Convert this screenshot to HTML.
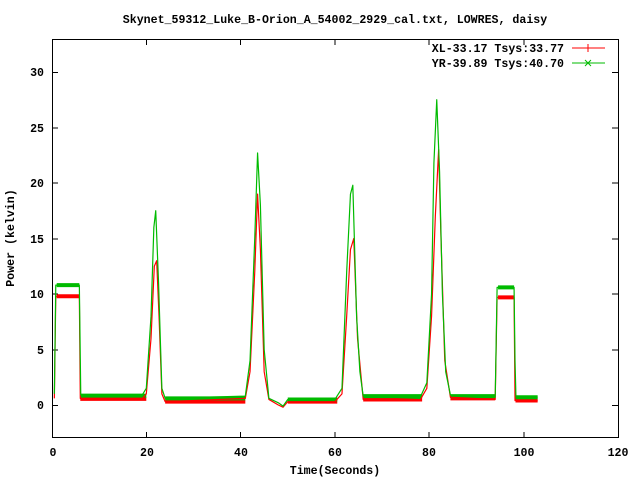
<!DOCTYPE html>
<html><head><style>
body{margin:0;background:#fff;width:640px;height:480px;overflow:hidden}
text{font-family:"Liberation Mono",monospace;font-weight:bold;font-size:11.6px;fill:#000}
</style></head><body>
<svg width="640" height="480" xmlns="http://www.w3.org/2000/svg">
<rect width="640" height="480" fill="#fff"/>
<text x="335" y="23" text-anchor="middle">Skynet_59312_Luke_B-Orion_A_54002_2929_cal.txt, LOWRES, daisy</text>
<text x="335" y="474" text-anchor="middle">Time(Seconds)</text>
<text transform="translate(14,238) rotate(-90)" text-anchor="middle">Power (kelvin)</text>
<g stroke="#000" stroke-width="1" fill="none">
<rect x="52.5" y="39.5" width="566" height="398"/>
<path d="M52 405.5h6M52 350h6M52 294h6M52 239h6M52 183h6M52 128h6M52 72.5h6
M618 405.5h-6M618 350h-6M618 294h-6M618 239h-6M618 183h-6M618 128h-6M618 72.5h-6
M146.5 438v-6M240.5 438v-6M335 438v-6M429 438v-6M524 438v-6
M146.5 39v6M240.5 39v6M335 39v6M429 39v6M524 39v6"/>
</g>
<g text-anchor="end">
<text x="44" y="409">0</text><text x="44" y="354">5</text><text x="44" y="298">10</text>
<text x="44" y="243">15</text><text x="44" y="187">20</text><text x="44" y="132">25</text><text x="44" y="76">30</text>
</g>
<g text-anchor="middle">
<text x="53" y="456">0</text><text x="147" y="456">20</text><text x="241" y="456">40</text>
<text x="335" y="456">60</text><text x="429" y="456">80</text><text x="524" y="456">100</text><text x="618" y="456">120</text>
</g>
<text x="564" y="52" text-anchor="end">XL-33.17 Tsys:33.77</text>
<text x="564" y="67" text-anchor="end">YR-39.89 Tsys:40.70</text>
<path d="M572 48h33M588 44v8" stroke="#f00" fill="none"/>
<path d="M572 63h33M585 60l6 6M585 66l6-6" stroke="#0b0" fill="none"/>
<g transform="translate(52,405) scale(4.715,-11.1)" fill="none" stroke-linejoin="round">
<g stroke="#f00" stroke-width="4">
<path vector-effect="non-scaling-stroke" d="M1 9.8H5.8M94.6 9.7H98M6 0.55H20M24 0.3H41M50 0.3H60.5M66 0.5H78.5M84.5 0.6H94M98.3 0.4H103"/>
</g>
<g stroke="#0b0" stroke-width="4">
<path vector-effect="non-scaling-stroke" d="M1 10.8H5.8M94.6 10.6H98M6 0.85H20M24 0.6H41M50 0.5H60.5M66 0.8H78.5M84.5 0.8H94M98.3 0.7H103"/>
</g>
<polyline vector-effect="non-scaling-stroke" stroke="#f00" stroke-width="1.2" points="0.5,0.6 0.8,9.8 5.8,9.8 6,0.6 19,0.5 20,1 21,6 21.7,12.5 22.2,13 22.7,8 23.3,1 24,0.3 41,0.6 42,3 43,12 43.6,19 44.2,14 45,3 46,0.5 48,0 49,-0.2 50,0.3 60,0.3 61.5,1 62.5,8 63.3,14 64,15 64.8,6 66,0.5 78,0.4 79.5,1.5 80.5,8 81.3,17 82,23 82.5,15 83.3,4 84.5,0.7 94,0.5 94.4,9.7 98,9.7 98.2,0.4 103,0.4"/>
<polyline vector-effect="non-scaling-stroke" stroke="#0b0" stroke-width="1.2" points="0.5,1 0.8,10.8 5.8,10.8 6,4.2 6.1,0.9 19,0.8 20,1.5 21,8 21.6,16 22,17.5 22.6,11 23.3,1.5 24,0.6 41,0.8 42,4 43,15 43.6,22.7 44.2,18 45,5 46,0.6 48,0.2 49,-0.1 50,0.5 60,0.5 61.5,1.5 62.5,12 63.3,19 63.8,19.8 64.6,8 65.3,3 66,0.8 78,0.6 79.5,2 80.5,10 81,21.8 81.6,27.5 82.2,21 82.8,10 83.5,3 84.5,0.9 94,0.7 94.4,10.6 98,10.6 98.2,4 98.4,0.7 103,0.7"/>
</g>
</svg>
</body></html>
